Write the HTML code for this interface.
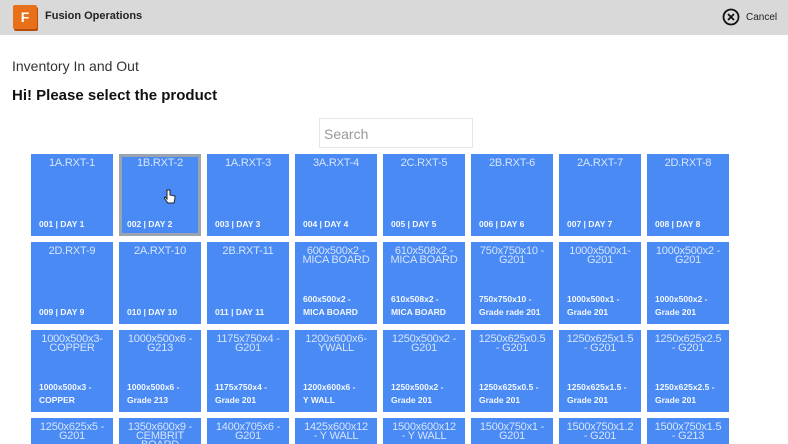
<!DOCTYPE html>
<html><head><meta charset="utf-8"><style>
*{margin:0;padding:0;box-sizing:border-box}
html,body{width:788px;height:444px;overflow:hidden}
body{background:#fff;font-family:"Liberation Sans",sans-serif;position:relative}
.hdr{position:absolute;left:0;top:0;width:788px;height:35px;background:#d9d9d9}
.logo{position:absolute;left:13px;top:5px;width:24px;height:24px;background:#e8701a;border-radius:2px;box-shadow:1px 2px 0 #b24d0c;color:#fff;font-weight:bold;font-size:14px;text-align:center;line-height:24px}
.ttl{position:absolute;left:45px;top:10px;font-size:11px;font-weight:bold;color:#222}
.cancel{position:absolute;font-size:10px;color:#222}
.t{position:absolute;width:82px;height:82px;background:#4a8af4;color:#fff;overflow:hidden}
.t .a{position:absolute;left:0;right:0;top:5px;text-align:center;font-size:11px;line-height:9px;color:#d6e4fd;padding:0 2px;letter-spacing:-0.2px}
.t .b{position:absolute;left:8px;bottom:5px;font-size:8.5px;line-height:13px;color:#f4f8ff;font-weight:bold}
.sel{border:3px solid #9aa3b0}
</style></head><body>
<div class="hdr">
<div class="logo">F</div><div class="ttl">Fusion Operations</div>
<svg style="position:absolute;left:722px;top:8px" width="18" height="18" viewBox="0 0 18 18"><circle cx="9" cy="9" r="7.5" fill="none" stroke="#111" stroke-width="1.8"/><path d="M6 6L12 12M12 6L6 12" stroke="#111" stroke-width="1.8"/></svg>
<div class="cancel" style="left:746px;top:12px">Cancel</div>
</div>
<div style="position:absolute;left:12px;top:58px;font-size:14px;color:#333">Inventory In and Out</div>
<div style="position:absolute;left:12px;top:87px;font-size:15px;font-weight:bold;color:#111">Hi! Please select the product</div>
<div style="position:absolute;left:319px;top:118px;width:154px;height:30px;border:1px solid #e6e6e6;font-size:14px;color:#999;padding:7px 4px">Search</div>
<div id="g"></div>
<script>
var d=[
["1A.RXT-1","001 | DAY 1"],["1B.RXT-2","002 | DAY 2"],["1A.RXT-3","003 | DAY 3"],["3A.RXT-4","004 | DAY 4"],["2C.RXT-5","005 | DAY 5"],["2B.RXT-6","006 | DAY 6"],["2A.RXT-7","007 | DAY 7"],["2D.RXT-8","008 | DAY 8"],
["2D.RXT-9","009 | DAY 9"],["2A.RXT-10","010 | DAY 10"],["2B.RXT-11","011 | DAY 11"],["600x500x2 -<br>MICA BOARD","600x500x2 -<br>MICA BOARD"],["610x508x2 -<br>MICA BOARD","610x508x2 -<br>MICA BOARD"],["750x750x10 -<br>G201","750x750x10 -<br>Grade rade 201"],["1000x500x1-<br>G201","1000x500x1 -<br>Grade 201"],["1000x500x2 -<br>G201","1000x500x2 -<br>Grade 201"],
["1000x500x3-<br>COPPER","1000x500x3 -<br>COPPER"],["1000x500x6 -<br>G213","1000x500x6 -<br>Grade 213"],["1175x750x4 -<br>G201","1175x750x4 -<br>Grade 201"],["1200x600x6-<br>YWALL","1200x600x6 -<br>Y WALL"],["1250x500x2 -<br>G201","1250x500x2 -<br>Grade 201"],["1250x625x0.5<br>- G201","1250x625x0.5 -<br>Grade 201"],["1250x625x1.5<br>- G201","1250x625x1.5 -<br>Grade 201"],["1250x625x2.5<br>- G201","1250x625x2.5 -<br>Grade 201"],
["1250x625x5 -<br>G201",""],["1350x600x9 -<br>CEMBRIT<br>BOARD",""],["1400x705x6 -<br>G201",""],["1425x600x12<br>- Y WALL",""],["1500x600x12<br>- Y WALL",""],["1500x750x1 -<br>G201",""],["1500x750x1.2<br>- G201",""],["1500x750x1.5<br>- G213",""]];
var h="";d.forEach(function(e,i){var c=i%8,r=Math.floor(i/8);
h+='<div class="t'+(i==1?' sel':'')+'" style="left:'+(31+c*88)+'px;top:'+(154+r*88)+'px'+(r==3?';height:26px':'')+'"><div class="a"'+(i==1?' style="top:2px"':'')+'>'+e[0]+'</div>'+(e[1]?'<div class="b"'+(i==1?' style="left:5px;bottom:2px"':'')+'>'+e[1]+'</div>':'')+'</div>';});
document.getElementById("g").innerHTML=h;
</script>
<svg style="position:absolute;left:164px;top:189px" width="12" height="16" viewBox="0 0 12 16"><path d="M3 1v9l-2-2-1 1 4 5h6l1-5V7l-5-1V1z" fill="#fff" stroke="#222" stroke-width="1"/></svg>
</body></html>
